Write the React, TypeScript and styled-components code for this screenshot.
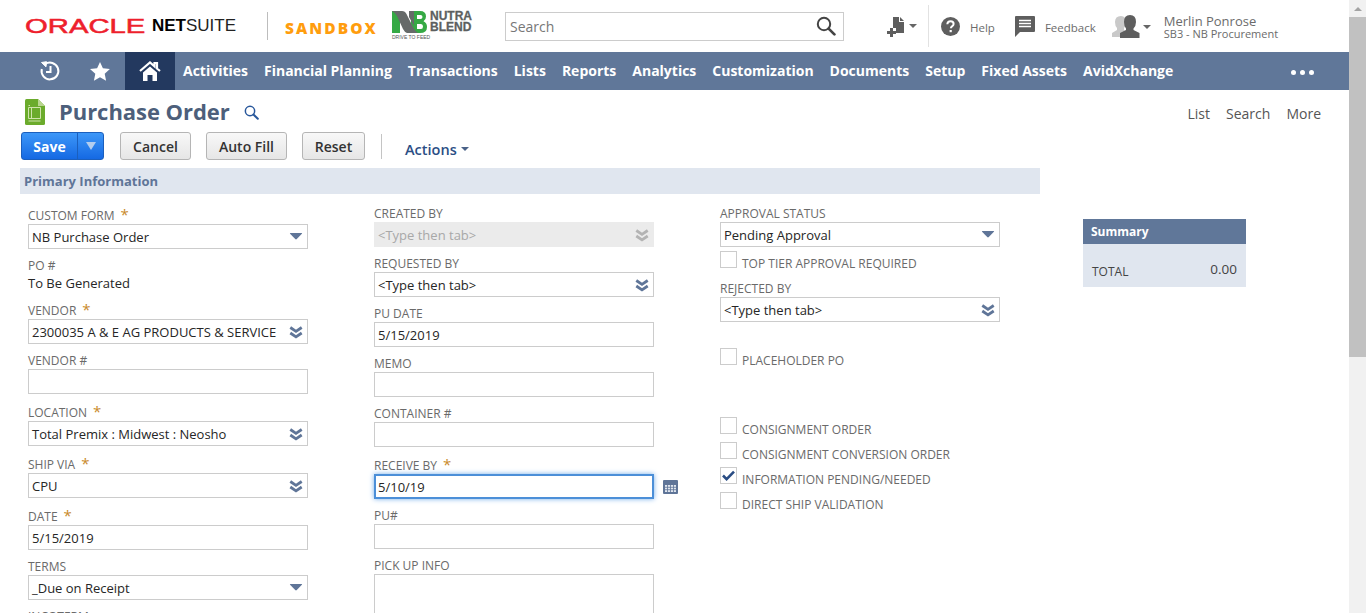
import React from "react";
import styled, { createGlobalStyle } from "styled-components";

const Global = createGlobalStyle`
  html, body { margin: 0; padding: 0; height: 613px; overflow: hidden; background: #fff; }
  body { font-family: "Open Sans", "Liberation Sans", sans-serif; color: #262626; }
  * { box-sizing: border-box; }
`;

const Shell = styled.div`display: flex; width: 1366px; height: 613px; overflow: hidden;`;
const Page = styled.div`width: 1349px; height: 613px; overflow: hidden; flex: none;`;
const Track = styled.div`width: 17px; height: 613px; background: #f1f1f1; flex: none; display: flex; flex-direction: column; align-items: center;`;
const TrackArrow = styled.div`
  width: 0; height: 0; margin-top: 7px; margin-bottom: 6px;
  border-left: 4px solid transparent; border-right: 4px solid transparent; border-bottom: 4px solid #a3a3a3;
`;
const Thumb = styled.div`width: 17px; height: 340px; background: #c1c1c1;`;

const Header = styled.header`display: flex; align-items: center; height: 52px; padding-left: 25px; position: relative;`;
const OracleMark = styled.div`display: flex; align-items: center; width: 217px; height: 20px; flex: none;`;
const Oracle = styled.span`
  font-family: "Liberation Sans", sans-serif; font-size: 19.5px; line-height: 20px; color: #ee1f2d;
  display: inline-block; width: 122px; transform-origin: 0 50%; transform: scaleX(1.5);
  -webkit-text-stroke: 0.5px #ee1f2d; white-space: nowrap;
`;
const Suite = styled.span`
  font-family: "Liberation Sans", sans-serif; font-size: 17px; line-height: 20px; color: #222; margin-left: 5px; white-space: nowrap;
  b { color: #000; font-weight: 700; }
`;
const LogoRule = styled.div`width: 1px; height: 28px; background: #bdbdbd; margin-left: 25px; flex: none;`;
const Sandbox = styled.span`
  font-family: "Open Sans", sans-serif; font-weight: 800; font-size: 15.5px; letter-spacing: 2.05px; color: #ff9d0e; margin-left: 17px; width: 107px; flex: none; margin-top: 3px;
`;
const NBLogo = styled.div`display: flex; flex: none; width: 113px; position: relative; height: 32px; margin-top: -1px;`;
const NBWords = styled.div`
  font-family: "Liberation Sans", sans-serif; font-weight: 700; font-size: 12px; line-height: 11px; color: #5c5f60; margin-left: 2px; margin-top: 1px;
  -webkit-text-stroke: 0.3px #5c5f60;
`;
const NBTag = styled.span`
  position: absolute; left: 0; top: 24px; font-family: "Liberation Sans", sans-serif; font-size: 5px; line-height: 7px; color: #555; white-space: nowrap;
`;
const SearchBox = styled.div`
  display: flex; align-items: center; justify-content: space-between; width: 339px; height: 29px; border: 1px solid #ccc; margin-left: 0; padding: 0 7px 0 4px; flex: none;
  font-size: 14px; color: #777; background: #fff;
`;
const HeadTools = styled.div`display: flex; align-items: center; height: 52px; margin-left: 43px; color: #666;`;
const ToolIconGroup = styled.div`display: flex; align-items: center; width: 41px; gap: 3px; flex: none;`;
const ToolRule = styled.div`width: 1px; height: 42px; background: #e2e2e2; margin-right: 12px; flex: none;`;
const ToolText = styled.span`font-size: 11.5px; color: #6b6b6b; margin-left: 10px; margin-right: 20px; padding-top: 2px;`;
const Identity = styled.div`display: flex; flex-direction: column; margin-left: 13px; color: #6b6b6b; font-size: 13px; line-height: 14px; padding-top: 2px;`;
const Role = styled.span`font-size: 11px; line-height: 12px;`;
const Caret = styled.i<{ $c?: string; $w?: number; $h?: number }>`
  display: inline-block; width: 0; height: 0; flex: none;
  border-left: ${p => p.$w ?? 4}px solid transparent; border-right: ${p => p.$w ?? 4}px solid transparent;
  border-top: ${p => p.$h ?? p.$w ?? 4}px solid ${p => p.$c ?? "#666"};
`;

const Nav = styled.nav`display: flex; align-items: stretch; height: 38px; background: #607799; padding-left: 25px; color: #fff;`;
const NavIcon = styled.div<{ $active?: boolean }>`
  width: 50px; display: flex; align-items: center; justify-content: center; flex: none;
  background: ${p => (p.$active ? "#23395f" : "transparent")};
`;
const NavLinks = styled.div`display: flex; align-items: center; gap: 16px; margin-left: 8px; padding-bottom: 2px; font-weight: 700; font-size: 14px; white-space: nowrap; letter-spacing: -0.005px;`;
const NavDots = styled.div`display: flex; gap: 4px; margin-left: 118px; align-items: center; padding-top: 2px;`;
const Dot = styled.span`width: 5px; height: 5px; border-radius: 50%; background: #fff;`;

const TitleRow = styled.div`display: flex; align-items: center; height: 42px; padding: 2px 28px 0 25px; justify-content: space-between;`;
const TitleLeft = styled.div`display: flex; align-items: center;`;
const Title = styled.h1`margin: 0 14px 2px 14px; font-size: 22px; line-height: 30px; font-weight: 700; letter-spacing: -0.05px; color: #4d5f7b;`;
const TopLinks = styled.div`display: flex; gap: 16px; font-size: 14px; color: #555; padding-top: 3px;`;

const Toolbar = styled.div`display: flex; align-items: center; height: 28px; padding-left: 21px;`;
const SaveGroup = styled.div`
  display: flex; width: 83px; height: 28px; border: 1px solid #1b5fbd; border-radius: 3px; overflow: hidden; margin-right: 16px;
  background: linear-gradient(#3d97f8, #1569e3); color: #fff; font-weight: 700; font-size: 14px;
`;
const SaveLabel = styled.div`width: 56px; display: flex; align-items: center; justify-content: center; border-right: 1px solid #1b5fbd;`;
const SaveArrow = styled.div`flex: 1; display: flex; align-items: center; justify-content: center;`;
const Btn = styled.button<{ $w: number }>`
  width: ${p => p.$w}px; height: 28px; margin: 0 15px 0 0; padding: 0; border: 1px solid #b5b5b5; border-radius: 3px;
  background: linear-gradient(#f8f8f8, #e6e6e6); font-family: inherit; font-size: 14px; font-weight: 600; color: #333;
`;
const BarRule = styled.div`width: 1px; height: 25px; background: #c4c4c4; margin-left: 1px; margin-right: 23px;`;
const Actions = styled.div`display: flex; align-items: center; gap: 4px; color: #2b4e85; font-size: 14.5px; font-weight: 600; padding-top: 6px;`;

const Body = styled.div`display: flex; padding-left: 20px;`;
const FormArea = styled.div`width: 1020px; flex: none; margin-top: 8px;`;
const Band = styled.div`
  height: 26px; background: #e0e6ef; color: #5f7598; font-weight: 700; font-size: 13px; line-height: 26px; padding-left: 4px;
`;
const Cols = styled.div`display: grid; grid-template-columns: 280px 280px 280px; column-gap: 66px; padding: 11px 0 0 8px;`;
const Col = styled.div`display: flex; flex-direction: column; min-width: 0;`;
const Field = styled.div<{ $mt?: number }>`margin-top: ${p => p.$mt ?? 8}px;`;
const Label = styled.div<{ $star?: boolean }>`
  font-size: 12px; height: ${p => (p.$star ? 19 : 17)}px; line-height: 17px; padding-top: ${p => (p.$star ? 2 : 0)}px; color: #6a6a6a; text-transform: uppercase; white-space: nowrap;
`;
const Star = styled.span`color: #c98a2b; font-size: 15px; margin-left: 6px; line-height: 12px;`;
const StaticValue = styled.div`font-size: 13px; line-height: 19px; color: #262626;`;
const Input = styled.div<{ $h?: number; $focus?: boolean; $disabled?: boolean }>`
  display: flex; align-items: center; justify-content: space-between; height: ${p => p.$h ?? 25}px; padding: 1px 4px 0 ${p => (p.$focus ? 2 : 3)}px;
  border: ${p => (p.$focus ? "2px solid #4c8fd8" : p.$disabled ? "1px solid #ebebeb" : "1px solid #ccc")};
  box-shadow: ${p => (p.$focus ? "0 0 5px #74ade9" : "none")};
  background: ${p => (p.$disabled ? "#ebebeb" : "#fff")};
  color: ${p => (p.$disabled ? "#a8a8a8" : "#262626")};
  font-size: 13px; white-space: nowrap;
`;
const DateRow = styled.div`position: relative;`;
const CalIcon = styled.span`position: absolute; left: 289px; top: 6px; line-height: 0;`;
const CheckRow = styled.div<{ $mt?: number }>`display: flex; margin-top: ${p => p.$mt ?? 8}px; height: 17px;`;
const CheckBox = styled.span`
  width: 17px; height: 17px; border: 1px solid #ccc; flex: none; display: flex; align-items: center; justify-content: center; margin-right: 5px;
`;
const CheckText = styled.span`font-size: 12px; line-height: 17px; color: #6a6a6a; text-transform: uppercase; white-space: nowrap; padding-top: 4px;`;

const Side = styled.aside`width: 163px; margin: 59px 0 0 43px; flex: none;`;
const SumHead = styled.div`height: 25px; background: #607799; color: #fff; font-weight: 700; font-size: 12px; line-height: 25px; padding-left: 8px;`;
const SumBody = styled.div`height: 43px; background: #e0e6ef; display: flex; justify-content: space-between; padding: 16px 9px 0 9px;`;
const SumKey = styled.span`font-size: 12px; line-height: 22px; color: #444; padding-top: 1px;`;
const SumVal = styled.span`font-size: 13.5px; line-height: 18px; color: #444;`;

const Drop = () => (
  <svg width="14" height="8" viewBox="0 0 14 8" style={{ marginTop: -2 }}><path d="M1.500 1h11q1 0 .4.8L7.800 7q-.8.8-1.600 0L1.100 1.800Q.5 1 1.500 1z" fill="#5f7598" /></svg>
);
const Dbl = ({ c = "#5f7598" }: { c?: string }) => (
  <svg width="14" height="13" viewBox="0 0 14 13" fill="none" stroke={c} strokeWidth="2.800"><path d="M1.300 1.500L7 5.300l5.700-3.800M1.300 7L7 10.800 12.700 7" /></svg>
);

const Mag = ({ s = 20, c = "#444", w = 2 }: { s?: number; c?: string; w?: number }) => (
  <svg width={s} height={s} viewBox="0 0 20 20" fill="none" stroke={c} strokeWidth={w} strokeLinecap="round">
    <circle cx="8" cy="8" r="6.200" /><path d="M12.600 12.600L18.400 18.400" strokeWidth={w + 0.7} />
  </svg>
);

type FieldDef = { label: string; star?: boolean; value?: string; kind?: "drop" | "dbl" | "text" | "static"; mt?: number };
const col1: FieldDef[] = [
  { label: "Custom Form", star: true, value: "NB Purchase Order", kind: "drop", mt: 0 },
  { label: "PO #", value: "To Be Generated", kind: "static" },
  { label: "Vendor", star: true, value: "2300035 A & E AG PRODUCTS & SERVICE", kind: "dbl", mt: 7 },
  { label: "Vendor #", kind: "text" },
  { label: "Location", star: true, value: "Total Premix : Midwest : Neosho", kind: "dbl", mt: 8 },
  { label: "Ship Via", star: true, value: "CPU", kind: "dbl", mt: 8 },
  { label: "Date", star: true, value: "5/15/2019", kind: "text", mt: 8 },
  { label: "Terms", value: "_Due on Receipt", kind: "drop" },
  { label: "Incoterm" },
];

const renderField = (f: FieldDef) => (
  <Field key={f.label} $mt={f.mt}>
    <Label $star={f.star}>{f.label}{f.star && <Star>*</Star>}</Label>
    {f.kind === "static" && <StaticValue>{f.value}</StaticValue>}
    {(f.kind === "drop" || f.kind === "dbl" || f.kind === "text") && (
      <Input>
        <span>{f.value}</span>
        {f.kind === "drop" && <Drop />}
        {f.kind === "dbl" && <Dbl />}
      </Input>
    )}
  </Field>
);

const col2Top: FieldDef[] = [
  { label: "Requested By", value: "<Type then tab>", kind: "dbl" },
  { label: "PU Date", value: "5/15/2019", kind: "text" },
  { label: "Memo", kind: "text" },
  { label: "Container #", kind: "text" },
];

const Check = ({ label, on, mt }: { label: string; on?: boolean; mt?: number }) => (
  <CheckRow $mt={mt}>
    <CheckBox>
      {on && <svg width="13" height="11" viewBox="0 0 13 11"><path d="M1 5.500l3.600 3.600L12 1.600" fill="none" stroke="#2a4d84" strokeWidth="2.600" /></svg>}
    </CheckBox>
    <CheckText>{label}</CheckText>
  </CheckRow>
);

export default function App() {
  return (
    <Shell>
      <Global />
      <Page>
        <Header>
          <OracleMark>
            <Oracle>ORACLE</Oracle>
            <Suite><b>NET</b>SUITE</Suite>
          </OracleMark>
          <LogoRule />
          <Sandbox>SANDBOX</Sandbox>
          <NBLogo>
            <svg width="36" height="24" viewBox="0 0 36 24">
              <path d="M0 1h8v22H0z" fill="#35a944" />
              <path d="M19 1h9q6 0 6 5.500 0 3.400-2.500 4.800 3.500 1.500 3.500 5.700 0 6-7 6H19z" fill="#35a944" />
              <path d="M0 1h10q3 0 4.500 3l7 14q1.500 3 4.500 5H15q-2.500-1-4-4L5 6Q3.500 3 0 1z" fill="#666a69" />
              <path d="M17 1h5v15l-5-9z" fill="#666a69" />
              <path d="M25 5h3.500q2 0 2 2t-2 2H25zM25 14h4q2 0 2 2.500T29 19h-4z" fill="#fff" />
            </svg>
            <NBTag>DRIVE TO FEED</NBTag>
            <NBWords>NUTRA<br />BLEND</NBWords>
          </NBLogo>
          <SearchBox>
            <span>Search</span>
            <Mag />
          </SearchBox>
          <HeadTools>
            <ToolIconGroup>
              <svg width="19" height="21" viewBox="0 0 19 21" fill="#5e5e5e">
                <path d="M6 1h6v5h5v11H9v-5H6z" /><path d="M13 1l4 4h-4z" /><path d="M3 12h3v3h3v3H6v3H3v-3H0v-3h3z" />
              </svg>
              <Caret />
            </ToolIconGroup>
            <ToolRule />
            <svg width="19" height="19" viewBox="0 0 19 19"><circle cx="9.500" cy="9.500" r="9.500" fill="#5e5e5e" /><path d="M6.300 7.300q.2-3 3.300-3 3 0 3 2.600 0 1.500-1.600 2.400-1.100.7-1.100 2" fill="none" stroke="#fff" strokeWidth="2" /><rect x="8.600" y="13" width="2.200" height="2.200" fill="#fff" /></svg>
            <ToolText>Help</ToolText>
            <svg width="20" height="21" viewBox="0 0 20 21"><path d="M1 0h18q1 0 1 1v14q0 1-1 1H5l-5 5V1q0-1 1-1z" fill="#5e5e5e" /><path d="M4 4.500h12M4 7.500h12M4 10.500h12" stroke="#fff" strokeWidth="1.500" /></svg>
            <ToolText>Feedback</ToolText>
            <svg width="28" height="23" viewBox="0 0 28 23" style={{ marginLeft: -4 }}>
              <path d="M9 1q5 0 5 6 0 4-2 6v2l3 2v5H0v-4l5-3v-2Q3 11 3 7q0-6 6-6z" fill="#c9c9c9" />
              <path d="M18 0q6 0 6 7 0 4-2.500 6.500V15l6 3v5H8v-5l6-3v-1.500Q12 11 12 7q0-7 6-7z" fill="#5e5e5e" />
            </svg>
            <Caret style={{ marginLeft: 3, marginTop: 2 }} />
            <Identity>
              <span>Merlin Ponrose</span>
              <Role>SB3 - NB Procurement</Role>
            </Identity>
          </HeadTools>
        </Header>

        <Nav>
          <NavIcon>
            <svg width="22" height="22" viewBox="0 0 22 22" fill="none" stroke="#fff" strokeWidth="2">
              <path d="M6 4.200A8.400 8.400 0 1 1 2.800 9" /><path d="M2.500 2.500L7.500 1.700 7 6.800z" fill="#fff" strokeWidth="1" /><path d="M11.500 6v6H7" />
            </svg>
          </NavIcon>
          <NavIcon>
            <svg width="20" height="19" viewBox="0 0 20 19"><path d="M10 0l2.900 6.300 7 .8-5.200 4.700 1.400 6.900L10 15.300l-6.100 3.400 1.400-6.900L0 7.100l7.100-.8z" fill="#fff" /></svg>
          </NavIcon>
          <NavIcon $active>
            <svg width="22" height="20" viewBox="0 0 22 20">
              <path d="M1 10L11 1.500 15.500 5.300V2H18v5.500l3 2.500" fill="none" stroke="#fff" strokeWidth="2.200" />
              <path d="M4 11.500L11 5.500l7 6V20h-4.500v-6h-5v6H4z" fill="#fff" />
            </svg>
          </NavIcon>
          <NavLinks>
            {["Activities", "Financial Planning", "Transactions", "Lists", "Reports", "Analytics", "Customization", "Documents", "Setup", "Fixed Assets", "AvidXchange"].map(t => <span key={t}>{t}</span>)}
          </NavLinks>
          <NavDots><Dot /><Dot /><Dot /></NavDots>
        </Nav>

        <TitleRow>
          <TitleLeft>
            <svg width="20" height="26" viewBox="0 0 20 26">
              <path d="M1.500 0H13l7 7v17.500q0 1.500-1.500 1.500h-17Q0 26 0 24.500v-23Q0 0 1.500 0z" fill="#6bab2c" />
              <path d="M13 0l7 7h-7z" fill="#b9d68f" />
              <path d="M3.500 6.500h1.500M3.500 8.500h12v11h-12zM6.500 8.500v11M3.500 22h12" fill="none" stroke="#cfe3ac" strokeWidth="1" />
            </svg>
            <Title>Purchase Order</Title>
            <Mag s={15} c="#28579b" w={2} />
          </TitleLeft>
          <TopLinks><span>List</span><span>Search</span><span>More</span></TopLinks>
        </TitleRow>

        <Toolbar>
          <SaveGroup>
            <SaveLabel>Save</SaveLabel>
            <SaveArrow><Caret $c="#b3cdee" $w={5} $h={8} /></SaveArrow>
          </SaveGroup>
          <Btn $w={71}>Cancel</Btn>
          <Btn $w={81}>Auto Fill</Btn>
          <Btn $w={63}>Reset</Btn>
          <BarRule />
          <Actions>Actions<Caret $c="#4a6288" /></Actions>
        </Toolbar>

        <Body>
          <FormArea>
            <Band>Primary Information</Band>
            <Cols>
              <Col>{col1.map(renderField)}</Col>
              <Col>
                <Field $mt={0}>
                  <Label>Created By</Label>
                  <Input $disabled><span>&lt;Type then tab&gt;</span><Dbl c="#b3b3b3" /></Input>
                </Field>
                {col2Top.map(renderField)}
                <Field>
                  <Label $star>Receive By<Star>*</Star></Label>
                  <DateRow>
                    <Input $focus><span>5/10/19</span></Input>
                    <CalIcon>
                      <svg width="15" height="14" viewBox="0 0 15 14">
                        <rect width="15" height="14" rx="1" fill="#5f7598" />
                        <path d="M2 5h11v7H2z" fill="#dfe5ee" />
                        <path d="M4.500 5v7M7.500 5v7M10.500 5v7M2 7.300h11M2 9.700h11" stroke="#5f7598" strokeWidth="0.800" />
                      </svg>
                    </CalIcon>
                  </DateRow>
                </Field>
                <Field><Label>PU#</Label><Input /></Field>
                <Field><Label>Pick Up Info</Label><Input $h={80} /></Field>
              </Col>
              <Col>
                <Field $mt={0}>
                  <Label>Approval Status</Label>
                  <Input><span>Pending Approval</span><Drop /></Input>
                </Field>
                <Check label="Top Tier Approval Required" mt={4} />
                <Field $mt={12}>
                  <Label>Rejected By</Label>
                  <Input><span>&lt;Type then tab&gt;</span><Dbl /></Input>
                </Field>
                <Check label="Placeholder PO" mt={26} />
                <Check label="Consignment Order" mt={52} />
                <Check label="Consignment Conversion Order" />
                <Check label="Information Pending/Needed" on />
                <Check label="Direct Ship Validation" />
              </Col>
            </Cols>
          </FormArea>
          <Side>
            <SumHead>Summary</SumHead>
            <SumBody><SumKey>TOTAL</SumKey><SumVal>0.00</SumVal></SumBody>
          </Side>
        </Body>
      </Page>
      <Track>
        <TrackArrow />
        <Thumb />
      </Track>
    </Shell>
  );
}
